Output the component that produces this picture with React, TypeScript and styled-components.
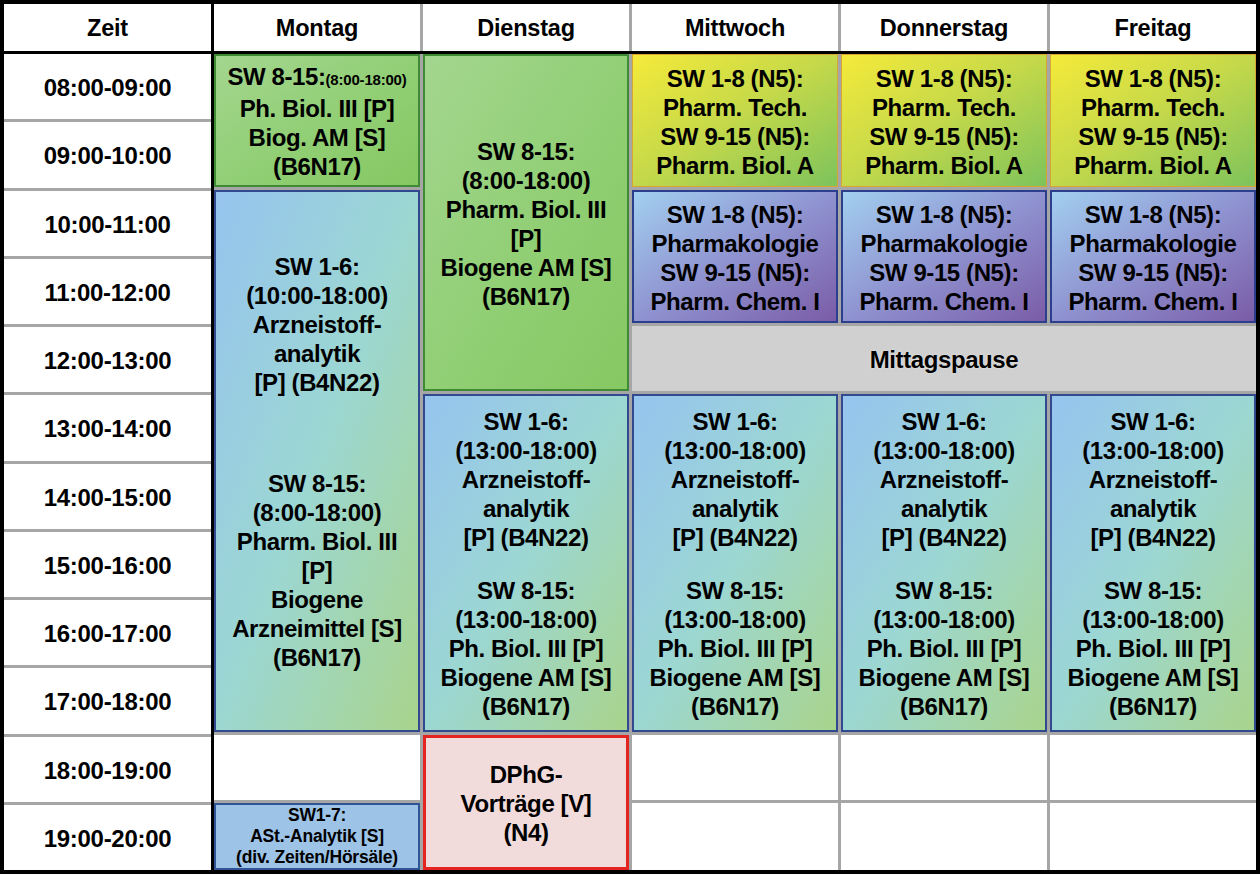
import React from "react";
import styled, { createGlobalStyle, css } from "styled-components";

const GlobalStyle = createGlobalStyle`
  html, body {
    margin: 0;
    padding: 0;
    background: #fff;
  }
  body {
    font-family: "Liberation Sans", Arial, "Helvetica Neue", sans-serif;
    color: #000;
  }
`;

const LINE = "#a6a6a6";

const Frame = styled.div`
  box-sizing: border-box;
  width: 1260px;
  display: grid;
  grid-template-columns: 207px 1fr;
  grid-template-rows: 47px 816px;
  gap: 3px;
  background: #000;
  border: 4px solid #000;
  font-weight: 700;
`;

const Corner = styled.div`
  background: #fff;
  display: flex;
  align-items: center;
  justify-content: center;
  padding-top: 1px;
  font-size: 23.5px;
  letter-spacing: -0.2px;
`;

const HeadRow = styled.div`
  display: grid;
  grid-template-columns: repeat(5, 1fr);
  gap: 3px;
  background: ${LINE};
`;

const HeadCell = styled.div`
  background: #fff;
  display: flex;
  align-items: center;
  justify-content: center;
  padding-top: 1px;
  font-size: 23.5px;
  letter-spacing: -0.2px;
`;

const TimeColumn = styled.div`
  display: grid;
  grid-template-rows: repeat(12, 1fr);
  gap: 3px;
  background: ${LINE};
`;

const TimeCell = styled.div`
  background: #fff;
  display: flex;
  align-items: center;
  justify-content: center;
  padding-top: 3px;
  font-size: 24px;
  letter-spacing: -0.3px;
`;

const Body = styled.div`
  display: grid;
  grid-template-columns: repeat(5, 1fr);
  grid-template-rows: repeat(12, 1fr);
  gap: 3px;
  background: ${LINE};
`;

type Tone = "green" | "yellow" | "purple" | "teal" | "blue" | "pink" | "pause";

const tones: Record<Tone, ReturnType<typeof css>> = {
  green: css`
    background: linear-gradient(to bottom right, #a3d68f 0%, #92cf76 50%, #86c862 100%);
    border: 2px solid #3f8a35;
  `,
  yellow: css`
    background: linear-gradient(to bottom right, #f5ea3a 0%, #c3d84a 50%, #7dc35c 100%);
    border: 1px solid #d8a635;
  `,
  purple: css`
    background: linear-gradient(to bottom right, #a2cff0 0%, #8f93d0 50%, #7a5ca6 100%);
    border: 2px solid #2c3f8e;
  `,
  teal: css`
    background: linear-gradient(to bottom right, #96c4ef 0%, #9cd7d2 50%, #a9d48c 100%);
    border: 2px solid #30498f;
  `,
  blue: css`
    background: #9dc3e6;
    border: 2px solid #2f5597;
  `,
  pink: css`
    background: #f2dcdb;
    border: 3px solid #e32420;
  `,
  pause: css`
    background: #d0d0d0;
    text-shadow: 0 0 2px rgba(255, 255, 255, 0.7);
  `,
};

const Block = styled.div<{ $tone: Tone; $small?: boolean }>`
  box-sizing: border-box;
  display: flex;
  flex-direction: column;
  align-items: center;
  justify-content: center;
  text-align: center;
  padding-top: ${(p) => (p.$small ? "0" : "2px")};
  font-size: ${(p) => (p.$small ? "17.5px" : "24px")};
  line-height: ${(p) => (p.$small ? "21px" : "29px")};
  letter-spacing: ${(p) => (p.$small ? "-0.2px" : "-0.4px")};
  white-space: nowrap;
  ${(p) => tones[p.$tone]}
`;

const Line = styled.div`
  min-height: 1em;
`;

const Fine = styled.span`
  font-size: 15px;
  letter-spacing: -0.2px;
`;

const Empty = styled.div`
  background: #fff;
`;

interface EventItem {
  col: number;
  row: number;
  rows: number;
  cols?: number;
  tone: Tone;
  small?: boolean;
  lines: React.ReactNode[];
}

const days = ["Montag", "Dienstag", "Mittwoch", "Donnerstag", "Freitag"];

const times = [
  "08:00-09:00",
  "09:00-10:00",
  "10:00-11:00",
  "11:00-12:00",
  "12:00-13:00",
  "13:00-14:00",
  "14:00-15:00",
  "15:00-16:00",
  "16:00-17:00",
  "17:00-18:00",
  "18:00-19:00",
  "19:00-20:00",
];

const afternoon = [
  "SW 1-6:",
  "(13:00-18:00)",
  "Arzneistoff-",
  "analytik",
  "[P] (B4N22)",
  "",
  "SW 8-15:",
  "(13:00-18:00)",
  "Ph. Biol. III [P]",
  "Biogene AM [S]",
  "(B6N17)",
];

const morningN5 = ["SW 1-8 (N5):", "Pharm. Tech.", "SW 9-15 (N5):", "Pharm. Biol. A"];
const lateN5 = ["SW 1-8 (N5):", "Pharmakologie", "SW 9-15 (N5):", "Pharm. Chem. I"];

const events: EventItem[] = [
  {
    col: 1,
    row: 1,
    rows: 2,
    tone: "green",
    lines: [
      <>
        SW 8-15:<Fine>(8:00-18:00)</Fine>
      </>,
      "Ph. Biol. III [P]",
      "Biog. AM [S]",
      "(B6N17)",
    ],
  },
  {
    col: 1,
    row: 3,
    rows: 8,
    tone: "teal",
    lines: [
      "SW 1-6:",
      "(10:00-18:00)",
      "Arzneistoff-",
      "analytik",
      "[P] (B4N22)",
      "",
      "",
      "",
      "SW 8-15:",
      "(8:00-18:00)",
      "Pharm. Biol. III",
      "[P]",
      "Biogene",
      "Arzneimittel [S]",
      "(B6N17)",
    ],
  },
  {
    col: 1,
    row: 12,
    rows: 1,
    tone: "blue",
    small: true,
    lines: ["SW1-7:", "ASt.-Analytik [S]", "(div. Zeiten/Hörsäle)"],
  },
  {
    col: 2,
    row: 1,
    rows: 5,
    tone: "green",
    lines: ["SW 8-15:", "(8:00-18:00)", "Pharm. Biol. III", "[P]", "Biogene AM [S]", "(B6N17)"],
  },
  { col: 2, row: 6, rows: 5, tone: "teal", lines: afternoon },
  { col: 2, row: 11, rows: 2, tone: "pink", lines: ["DPhG-", "Vorträge [V]", "(N4)"] },
  ...[3, 4, 5].flatMap((col) => [
    { col, row: 1, rows: 2, tone: "yellow" as Tone, lines: morningN5 },
    { col, row: 3, rows: 2, tone: "purple" as Tone, lines: lateN5 },
    { col, row: 6, rows: 5, tone: "teal" as Tone, lines: afternoon },
  ]),
  { col: 3, row: 5, rows: 1, cols: 3, tone: "pause", lines: ["Mittagspause"] },
];

const emptyCells = [
  { col: 1, row: 11 },
  ...[3, 4, 5].flatMap((col) => [
    { col, row: 11 },
    { col, row: 12 },
  ]),
];

const App: React.FC = () => {
  return (
    <>
      <GlobalStyle />
      <Frame>
        <Corner>Zeit</Corner>
        <HeadRow>
          {days.map((d) => (
            <HeadCell key={d}>{d}</HeadCell>
          ))}
        </HeadRow>
        <TimeColumn>
          {times.map((t) => (
            <TimeCell key={t}>{t}</TimeCell>
          ))}
        </TimeColumn>
        <Body>
          {events.map((e, i) => (
            <Block
              key={i}
              $tone={e.tone}
              $small={e.small}
              style={{
                gridColumn: `${e.col} / span ${e.cols ?? 1}`,
                gridRow: `${e.row} / span ${e.rows}`,
              }}
            >
              {e.lines.map((l, j) => (
                <Line key={j}>{l}</Line>
              ))}
            </Block>
          ))}
          {emptyCells.map((c) => (
            <Empty key={`${c.col}-${c.row}`} style={{ gridColumn: c.col, gridRow: c.row }} />
          ))}
        </Body>
      </Frame>
    </>
  );
};

export default App;
